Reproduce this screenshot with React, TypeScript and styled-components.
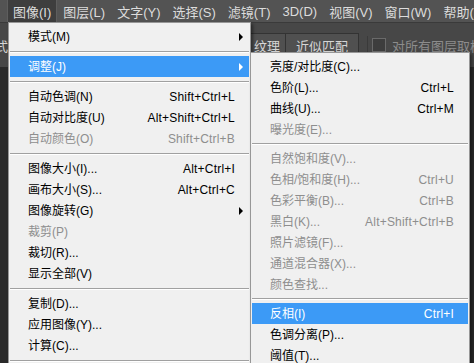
import styled, { createGlobalStyle } from 'styled-components';

const GlobalStyle = createGlobalStyle`
  html, body {
    margin: 0;
    padding: 0;
    background: #2a2a2a;
    overflow: hidden;
  }
  body {
    font-family: "Liberation Sans", "Noto Sans CJK SC", sans-serif;
  }
`;

const Screen = styled.div`
  position: relative;
  width: 474px;
  height: 363px;
  overflow: hidden;
  background: #2a2a2a;
`;

const MenuBar = styled.nav`
  display: flex;
  height: 22px;
  padding-left: 7px;
  background: #535353;
`;

const MenuBarItem = styled.div<{ $open?: boolean }>`
  display: flex;
  align-items: center;
  padding: 0 6px;
  font-size: 13px;
  color: #dcdcdc;
  white-space: nowrap;
  background: ${(p) => (p.$open ? '#3e3e3e' : 'transparent')};
  box-shadow: ${(p) => (p.$open ? 'inset 1px 0 #5e5e5e, inset -1px 0 #5e5e5e' : 'none')};
`;

const OptionsBar = styled.div`
  display: flex;
  align-items: center;
  height: 44px;
  background: #474747;
  border-top: 1px solid #3a3a3a;
  font-size: 13px;
  color: #d6d6d6;
`;

const CutLabel = styled.span`
  margin-left: -5px;
  white-space: nowrap;
`;

const TabGroup = styled.div`
  display: flex;
  margin-left: 239px;
  height: 24px;
  border: 1px solid #333;
  border-bottom: none;
`;

const Tab = styled.div<{ $wide?: boolean }>`
  display: flex;
  align-items: center;
  padding: 0 ${(p) => (p.$wide ? '10px' : '5px')};
  background: #505050;
  border-left: 1px solid #5c5c5c;
  & + & {
    border-left: 1px solid #333;
  }
  white-space: nowrap;
`;

const CheckOption = styled.label`
  display: flex;
  align-items: center;
  gap: 6px;
  margin-left: 8px;
  padding-left: 4px;
  border-left: 1px solid #3a3a3a;
  color: #8c8c8c;
  white-space: nowrap;
`;

const CheckBox = styled.span`
  width: 12px;
  height: 12px;
  border: 1px solid #6a6a6a;
  background: #3d3d3d;
`;

const MenuPanel = styled.div<{ $left: number; $top: number; $width: number }>`
  position: absolute;
  left: ${(p) => p.$left}px;
  top: ${(p) => p.$top}px;
  width: ${(p) => p.$width}px;
  box-sizing: border-box;
  padding: 3px 1px;
  background: #f0f0f0;
  border: 1px solid #979797;
  box-shadow: 2px 2px 3px rgba(0, 0, 0, 0.45);
  font-size: 12px;
`;

const Row = styled.div<{ $active?: boolean; $disabled?: boolean }>`
  display: flex;
  align-items: center;
  height: 21px;
  padding-left: 18px;
  white-space: nowrap;
  line-height: 1;
  background: ${(p) => (p.$active ? '#3c9af6' : 'transparent')};
  color: ${(p) => (p.$active ? '#ffffff' : p.$disabled ? '#8e8e8e' : '#000000')};
`;

const Label = styled.span`
  flex: 1;
`;

const Shortcut = styled.span`
  letter-spacing: 0.2px;
`;

const ArrowCell = styled.span`
  display: flex;
  align-items: center;
  justify-content: center;
  width: 14px;
  flex-shrink: 0;
`;

const Arrow = styled.span`
  width: 0;
  height: 0;
  border-left: 4px solid currentColor;
  border-top: 4px solid transparent;
  border-bottom: 4px solid transparent;
  margin-left: -2px;
`;

const Separator = styled.div<{ $compact?: boolean }>`
  height: ${(p) => (p.$compact ? '8px' : '9px')};
  display: flex;
  flex-direction: column;
  justify-content: center;
  &::before {
    content: '';
    height: 1px;
    background: #a0a0a0;
  }
  &::after {
    content: '';
    height: 1px;
    background: #ffffff;
  }
`;

type Entry =
  | 'sep'
  | {
      label: string;
      shortcut?: string;
      arrow?: boolean;
      active?: boolean;
      disabled?: boolean;
    };

const barItems = ['图像(I)', '图层(L)', '文字(Y)', '选择(S)', '滤镜(T)', '3D(D)', '视图(V)', '窗口(W)', '帮助(H)'];

const imageMenu: Entry[] = [
  { label: '模式(M)', arrow: true },
  'sep',
  { label: '调整(J)', arrow: true, active: true },
  'sep',
  { label: '自动色调(N)', shortcut: 'Shift+Ctrl+L' },
  { label: '自动对比度(U)', shortcut: 'Alt+Shift+Ctrl+L' },
  { label: '自动颜色(O)', shortcut: 'Shift+Ctrl+B', disabled: true },
  'sep',
  { label: '图像大小(I)...', shortcut: 'Alt+Ctrl+I' },
  { label: '画布大小(S)...', shortcut: 'Alt+Ctrl+C' },
  { label: '图像旋转(G)', arrow: true },
  { label: '裁剪(P)', disabled: true },
  { label: '裁切(R)...' },
  { label: '显示全部(V)' },
  'sep',
  { label: '复制(D)...' },
  { label: '应用图像(Y)...' },
  { label: '计算(C)...' },
  'sep',
];

const adjustMenu: Entry[] = [
  { label: '亮度/对比度(C)...' },
  { label: '色阶(L)...', shortcut: 'Ctrl+L' },
  { label: '曲线(U)...', shortcut: 'Ctrl+M' },
  { label: '曝光度(E)...', disabled: true },
  'sep',
  { label: '自然饱和度(V)...', disabled: true },
  { label: '色相/饱和度(H)...', shortcut: 'Ctrl+U', disabled: true },
  { label: '色彩平衡(B)...', shortcut: 'Ctrl+B', disabled: true },
  { label: '黑白(K)...', shortcut: 'Alt+Shift+Ctrl+B', disabled: true },
  { label: '照片滤镜(F)...', disabled: true },
  { label: '通道混合器(X)...', disabled: true },
  { label: '颜色查找...', disabled: true },
  'sep',
  { label: '反相(I)', shortcut: 'Ctrl+I', active: true },
  { label: '色调分离(P)...' },
  { label: '阈值(T)...' },
];

const renderEntries = (entries: Entry[], compact?: boolean) =>
  entries.map((e, i) => {
    if (e === 'sep') return <Separator key={i} $compact={compact} />;
    return (
      <Row key={i} $active={e.active} $disabled={e.disabled}>
        <Label>{e.label}</Label>
        {e.shortcut && <Shortcut>{e.shortcut}</Shortcut>}
        <ArrowCell>{e.arrow && <Arrow />}</ArrowCell>
      </Row>
    );
  });

const App = () => {
  return (
    <Screen>
      <GlobalStyle />
      <MenuBar>
        {barItems.map((b, i) => (
          <MenuBarItem key={b} $open={i === 0}>
            {b}
          </MenuBarItem>
        ))}
      </MenuBar>

      <OptionsBar>
        <CutLabel>式</CutLabel>
        <TabGroup>
          <Tab>纹理</Tab>
          <Tab $wide>近似匹配</Tab>
        </TabGroup>
        <CheckOption>
          <CheckBox />
          对所有图层取样
        </CheckOption>
      </OptionsBar>

      <MenuPanel $left={8} $top={22} $width={243}>
        {renderEntries(imageMenu)}
      </MenuPanel>

      <MenuPanel $left={250} $top={52} $width={220}>
        {renderEntries(adjustMenu, true)}
      </MenuPanel>
    </Screen>
  );
};

export default App;
